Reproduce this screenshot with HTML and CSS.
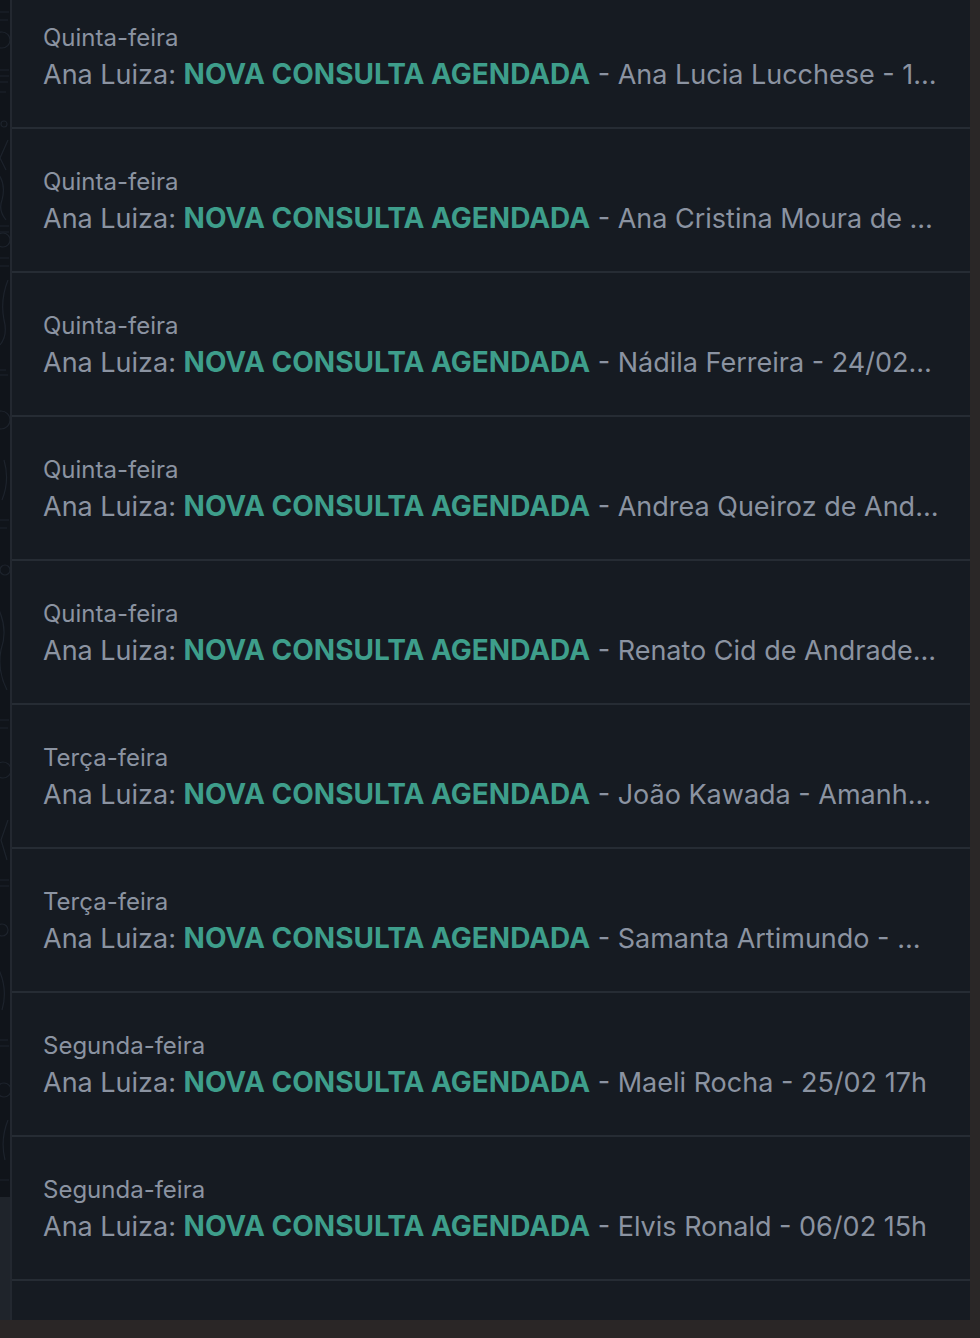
FILE: index.html
```html
<!DOCTYPE html>
<html lang="pt-BR">
<head>
<meta charset="utf-8">
<title>Conversas</title>
<link rel="stylesheet" href="styles.css">
</head>
<body>
<div class="frame">
  <div class="main">
    <aside class="rail">
      <svg class="doodles" width="10" height="1197" viewBox="0 0 10 1197" fill="none" stroke="#1d232c" stroke-width="1.2">
        <path d="M-2 12 H9 M-2 20 H8"/>
        <circle cx="2" cy="40" r="8"/>
        <path d="M-1 70 H9 M0 76 H9 M-1 82 H8 M0 92 H6"/>
        <circle cx="4" cy="124" r="3"/>
        <path d="M8 140 L0 158 L6 170 M-1 175 Q6 185 2 200 Q-2 210 6 220"/>
        <path d="M-1 226 H9 M-1 232 H9 M-1 258 H9 M-1 266 H9"/>
        <circle cx="3" cy="240" r="7"/>
        <path d="M8 280 Q0 300 4 320 Q8 335 0 345"/>
        <path d="M-2 370 H6 M-2 375 H8"/>
        <circle cx="1" cy="420" r="9"/>
        <path d="M4 460 Q10 480 2 500 M0 520 H9 M0 528 H7"/>
        <circle cx="5" cy="570" r="5"/>
        <path d="M-1 610 Q8 630 1 650 Q-3 670 7 690"/>
        <path d="M-1 720 H9 M-1 728 H8"/>
        <circle cx="3" cy="770" r="8"/>
        <path d="M8 820 L1 840 L7 860 M0 880 H9 M0 886 H9"/>
        <circle cx="2" cy="930" r="6"/>
        <path d="M-1 970 Q8 990 2 1010 M0 1040 H8 M0 1046 H9"/>
        <circle cx="4" cy="1090" r="7"/>
        <path d="M8 1120 Q0 1140 5 1160 M-1 1180 H9"/>
      </svg>
      <div class="rail-foot"></div>
    </aside>
    <section class="list">
      <div class="item first">
        <div class="day">Quinta-feira</div>
        <div class="msg"><span class="author">Ana Luiza:</span> <strong class="tag">NOVA CONSULTA AGENDADA</strong> - Ana Lucia Lucchese - 13/02 às 16h</div>
      </div>
      <div class="item">
        <div class="day">Quinta-feira</div>
        <div class="msg"><span class="author">Ana Luiza:</span> <strong class="tag">NOVA CONSULTA AGENDADA</strong> - Ana Cristina Moura de Oliveira - 20/02</div>
      </div>
      <div class="item">
        <div class="day">Quinta-feira</div>
        <div class="msg"><span class="author">Ana Luiza:</span> <strong class="tag">NOVA CONSULTA AGENDADA</strong> - Nádila Ferreira - 24/02 às 10h</div>
      </div>
      <div class="item">
        <div class="day">Quinta-feira</div>
        <div class="msg"><span class="author">Ana Luiza:</span> <strong class="tag">NOVA CONSULTA AGENDADA</strong> - Andrea Queiroz de Andrade - 21/02</div>
      </div>
      <div class="item">
        <div class="day">Quinta-feira</div>
        <div class="msg"><span class="author">Ana Luiza:</span> <strong class="tag">NOVA CONSULTA AGENDADA</strong> - Renato Cid de Andrade - 19/02</div>
      </div>
      <div class="item">
        <div class="day">Terça-feira</div>
        <div class="msg"><span class="author">Ana Luiza:</span> <strong class="tag">NOVA CONSULTA AGENDADA</strong> - João Kawada - Amanhã 14h</div>
      </div>
      <div class="item">
        <div class="day">Terça-feira</div>
        <div class="msg"><span class="author">Ana Luiza:</span> <strong class="tag">NOVA CONSULTA AGENDADA</strong> - Samanta Artimundo - Quarta 14h</div>
      </div>
      <div class="item">
        <div class="day">Segunda-feira</div>
        <div class="msg"><span class="author">Ana Luiza:</span> <strong class="tag">NOVA CONSULTA AGENDADA</strong> - Maeli Rocha - 25/02 17h</div>
      </div>
      <div class="item">
        <div class="day">Segunda-feira</div>
        <div class="msg"><span class="author">Ana Luiza:</span> <strong class="tag">NOVA CONSULTA AGENDADA</strong> - Elvis Ronald - 06/02 15h</div>
      </div>
      <div class="item">
        <div class="day">Segunda-feira</div>
        <div class="msg"><span class="author">Ana Luiza:</span> <strong class="tag">NOVA CONSULTA AGENDADA</strong></div>
      </div>
    </section>
    <div class="edge"></div>
  </div>
  <div class="bottom"></div>
</div>
</body>
</html>
```

FILE: styles.css
```css
html, body {
  margin: 0;
  padding: 0;
  background: #2a2626;
}
body {
  width: 980px;
  height: 1338px;
  overflow: hidden;
  font-family: Inter, "Noto Sans", sans-serif;
}
.frame {
  display: flex;
  flex-direction: column;
  height: 1338px;
}
.main {
  display: flex;
  height: 1320px;
  overflow: hidden;
}
.rail {
  width: 10px;
  flex: none;
  background: #10141a;
  border-right: 2px solid #232830;
  display: flex;
  flex-direction: column;
  overflow: hidden;
}
.doodles {
  display: block;
  flex: none;
}
.rail-foot {
  flex: 1;
  background: #1f242b;
}
.list {
  width: 958px;
  flex: none;
  background: #161b22;
  overflow: hidden;
}
.edge {
  flex: 1;
  background: #2a2727;
}
.bottom {
  height: 18px;
  background: #2a2626;
}
.item {
  height: 142px;
  border-bottom: 2px solid #262c34;
  box-sizing: content-box;
  padding: 0 31px;
  display: flex;
  flex-direction: column;
}
.item.first {
  margin-top: -15px;
}
.day {
  margin-top: 38px;
  font-size: 24px;
  line-height: 30px;
  color: #8b93a1;
}
.msg {
  margin-top: 3px;
  font-size: 27px;
  line-height: 36px;
  color: #8b93a1;
  white-space: nowrap;
  overflow: hidden;
  text-overflow: ellipsis;
}
.tag {
  font-size: 28px;
  font-weight: 700;
  color: #3e9e8b;
}
```
